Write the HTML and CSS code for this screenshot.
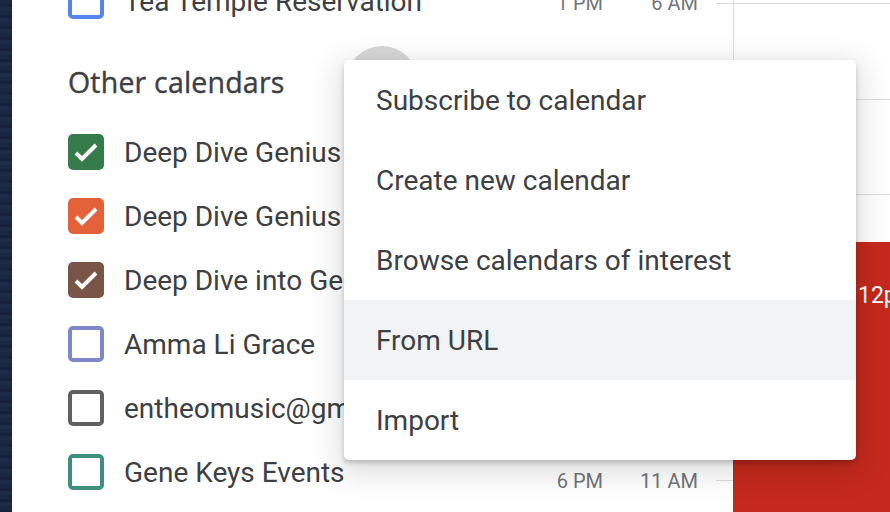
FILE: index.html
```html
<!DOCTYPE html>
<html lang="en">

<head>
  <meta charset="UTF-8" />
  <meta name="viewport" content="width=device-width, initial-scale=1.0" />
  <title>Calendar</title>
  <link rel="stylesheet" href="styles.css">
</head>

<body>
  <div class="app">
    <div class="desk"></div>

    <aside class="sidebar">
      <div class="cal-row">
        <span class="box" style="--c: #5484ed"></span>
        <span class="cal-name">Tea Temple Reservation</span>
      </div>

      <div class="section-head">
        <h3>Other calendars</h3>
        <span class="add-btn"></span>
        <span class="chev-btn"></span>
      </div>

      <div class="cal-row">
        <span class="box checked" style="--c: #367c4b">
          <svg viewBox="0 0 36 36"><path d="M8 19 L14 25 L28 11" /></svg>
        </span>
        <span class="cal-name">Deep Dive Genius Keys</span>
      </div>
      <div class="cal-row">
        <span class="box checked" style="--c: #e4623a">
          <svg viewBox="0 0 36 36"><path d="M8 19 L14 25 L28 11" /></svg>
        </span>
        <span class="cal-name">Deep Dive Genius Keys 2</span>
      </div>
      <div class="cal-row">
        <span class="box checked" style="--c: #795548">
          <svg viewBox="0 0 36 36"><path d="M8 19 L14 25 L28 11" /></svg>
        </span>
        <span class="cal-name">Deep Dive into Gene Keys</span>
      </div>
      <div class="cal-row">
        <span class="box" style="--c: #7e88c9"></span>
        <span class="cal-name">Amma Li Grace</span>
      </div>
      <div class="cal-row">
        <span class="box" style="--c: #616161"></span>
        <span class="cal-name">entheomusic@gmail.com</span>
      </div>
      <div class="cal-row">
        <span class="box" style="--c: #3f8f80"></span>
        <span class="cal-name">Gene Keys Events</span>
      </div>
    </aside>

    <div class="gutter">
      <div class="hour"><span class="tz1">1 PM</span><span class="tz2">6 AM</span><span class="tick"></span></div>
      <div class="hour"><span class="tz1">2 PM</span><span class="tz2">7 AM</span><span class="tick"></span></div>
      <div class="hour"><span class="tz1">3 PM</span><span class="tz2">8 AM</span><span class="tick"></span></div>
      <div class="hour"><span class="tz1">4 PM</span><span class="tz2">9 AM</span><span class="tick"></span></div>
      <div class="hour"><span class="tz1">5 PM</span><span class="tz2">10 AM</span><span class="tick"></span></div>
      <div class="hour"><span class="tz1">6 PM</span><span class="tz2">11 AM</span><span class="tick"></span></div>
    </div>

    <div class="grid">
      <div class="slot"></div>
      <div class="slot"></div>
      <div class="slot"></div>
      <div class="slot"></div>
      <div class="slot"></div>
      <div class="slot"></div>
      <div class="event"><span>12pm</span></div>
    </div>

    <ul class="menu">
      <li>Subscribe to calendar</li>
      <li>Create new calendar</li>
      <li>Browse calendars of interest</li>
      <li class="hover">From URL</li>
      <li>Import</li>
    </ul>
  </div>
</body>

</html>
```

FILE: styles.css
```css
:root {
  --text: #3c4043;
  --muted: #70757a;
  --line: #dadce0;
  --event: #c5291d;
}

body {
  margin: 0;
  font-family: Roboto, 'Liberation Sans', sans-serif;
  color: var(--text);
  background: #fff;
}

.app {
  position: relative;
  display: flex;
  width: 890px;
  height: 512px;
  overflow: hidden;
}

.desk {
  flex: none;
  width: 12px;
  background: repeating-linear-gradient(180deg, #1a2741 0 4px, #17223a 4px 7px, #1d2b48 7px 11px);
}

/* sidebar */

.sidebar {
  flex: none;
  width: 416px;
  padding: 0 56px;
  margin-top: -31px;
}

.cal-row {
  display: flex;
  align-items: center;
  gap: 20px;
  height: 64px;
}

.box {
  flex: none;
  width: 36px;
  height: 36px;
  box-sizing: border-box;
  border: 4px solid var(--c);
  border-radius: 5px;
}

.box.checked {
  background: var(--c);
  border: none;
}

.box svg {
  display: block;
  width: 36px;
  height: 36px;
  fill: none;
  stroke: #fff;
  stroke-width: 4;
}

.cal-name {
  font-size: 28px;
  white-space: nowrap;
}

.section-head {
  display: flex;
  align-items: center;
  height: 87px;
}

.section-head h3 {
  margin: 10px 0 0;
  font-family: 'Open Sans', sans-serif;
  font-weight: 500;
  font-size: 28.5px;
  letter-spacing: 0.2px;
  color: #3c4043;
  -webkit-text-stroke: 0.4px #3c4043;
}

.add-btn,
.chev-btn {
  flex: none;
  width: 72px;
  height: 72px;
  border-radius: 50%;
}

.add-btn {
  margin-left: auto;
  margin-top: 10px;
  background: #d8d8d8;
}

.chev-btn {
  width: 66px;
}

/* time gutter */

.gutter {
  flex: none;
  width: 193px;
  margin-top: -44.8px;
}

.hour {
  display: flex;
  align-items: center;
  height: 95.6px;
  font-size: 20px;
  color: var(--muted);
}

.tz1 {
  width: 63px;
  text-align: right;
}

.tz2 {
  width: 95px;
  text-align: right;
}

.tick {
  width: 17px;
  height: 1px;
  margin-left: 18px;
  background: var(--line);
}

/* day grid */

.grid {
  position: relative;
  flex: 1;
  margin-top: -44.8px;
  padding-top: 47.8px;
  border-left: 1px solid var(--line);
}

.slot {
  height: 95.6px;
  box-sizing: border-box;
  border-top: 1px solid var(--line);
}

.event {
  position: absolute;
  top: 286.8px;
  left: -1px;
  right: 0;
  bottom: -200px;
  background: var(--event);
  color: #fff;
  font-size: 23px;
  padding: 40px 0 0 125px;
  white-space: nowrap;
  overflow: hidden;
}

/* add-calendar menu */

.menu {
  position: absolute;
  top: 60px;
  left: 344px;
  width: 512px;
  margin: 0;
  padding: 0;
  list-style: none;
  background: #fff;
  border-radius: 5px;
  box-shadow: 0 3px 5px rgba(0, 0, 0, 0.2), 0 8px 30px 6px rgba(0, 0, 0, 0.13);
}

.menu li {
  display: flex;
  align-items: center;
  height: 80px;
  padding-left: 32px;
  font-size: 28px;
  color: var(--text);
}

.menu li.hover {
  background: #f1f3f4;
}
```
